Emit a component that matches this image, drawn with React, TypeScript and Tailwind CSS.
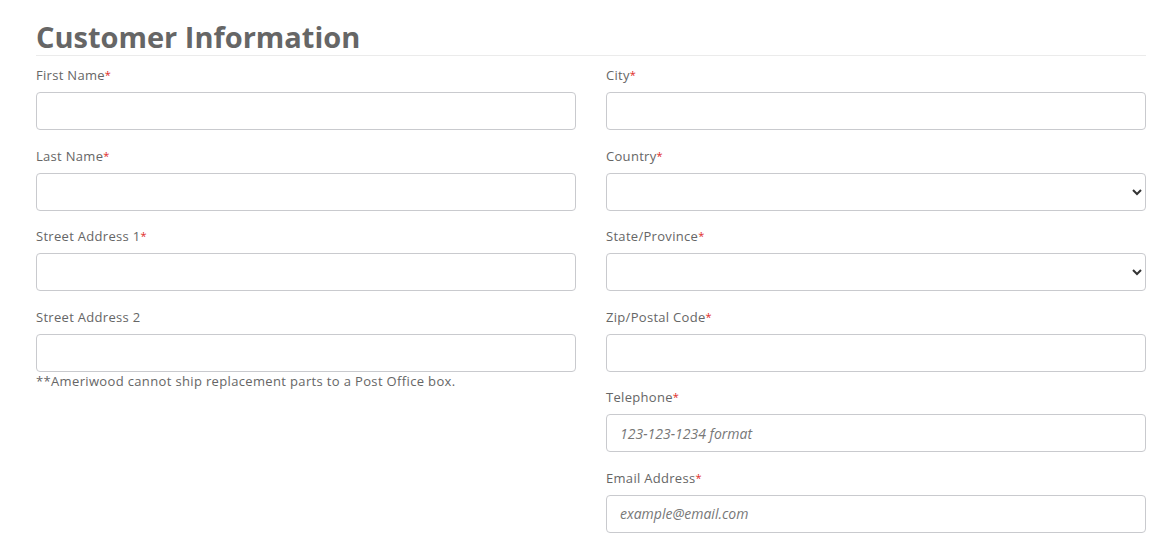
import React from "react";

const Field = ({ label, required = true, type = "input", placeholder }: { label: string; required?: boolean; type?: "input" | "select"; placeholder?: string }) => {
    return (
        <div className="mb-[15.6px]">
            <label className="block h-[20px] leading-[20px] text-[13px] tracking-[0.3px] text-[#666] mb-[7px]">
                {label}
                {required && <span className="text-[11px] align-top text-[#e02b27]">*</span>}
            </label>
            {type === "select" ? (
                <select className="block w-full h-[38px] rounded-[4px] border border-[#c9cace] bg-white px-[12px] text-[14px] text-[#333]">
                    <option></option>
                </select>
            ) : (
                <input
                    className="block w-full h-[38px] rounded-[4px] border border-[#c9cace] bg-white px-[13px] text-[14px] text-[#333] placeholder:italic placeholder:text-[#777]"
                    placeholder={placeholder}
                />
            )}
        </div>
    );
};

const App = () => {
    return (
        <div className="bg-white w-[1168px] h-[548px] pl-[36px] pr-[22px] pt-[19px] font-['Open_Sans',sans-serif] overflow-hidden">
            <h2 className="h-[37px] leading-[36px] text-[29px] font-bold text-[#666] border-b border-[#ebebeb]">
                Customer Information
            </h2>
            <div className="grid grid-cols-2 gap-x-[30px] pt-[9px]">
                <div>
                    <Field label="First Name" />
                    <Field label="Last Name" />
                    <Field label="Street Address 1" />
                    <div>
                        <label className="block h-[20px] leading-[20px] text-[13px] tracking-[0.3px] text-[#666] mb-[7px]">Street Address 2</label>
                        <input className="block w-full h-[38px] rounded-[4px] border border-[#c9cace] bg-white px-[13px] text-[14px]" />
                        <p className="text-[13px] leading-[18px] tracking-[0.35px] text-[#666]">**Ameriwood cannot ship replacement parts to a Post Office box.</p>
                    </div>
                </div>
                <div>
                    <Field label="City" />
                    <Field label="Country" type="select" />
                    <Field label="State/Province" type="select" />
                    <Field label="Zip/Postal Code" />
                    <Field label="Telephone" placeholder="123-123-1234 format" />
                    <Field label="Email Address" placeholder="example@email.com" />
                </div>
            </div>
        </div>
    );
};

export default App;
